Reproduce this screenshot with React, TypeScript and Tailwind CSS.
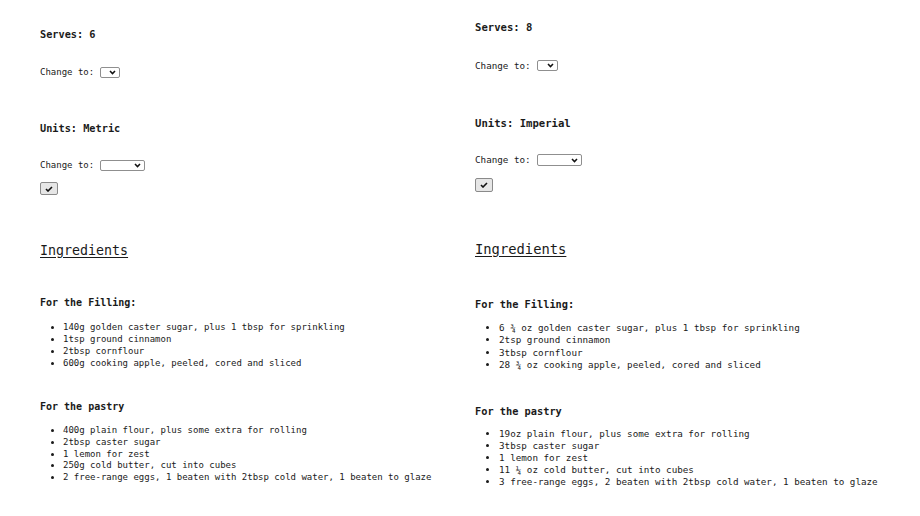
import React from "react";

const mono = { fontFamily: '"DejaVu Sans Mono", "Liberation Mono", monospace' };

function Chevron() {
  return (
    <svg width="7" height="5" viewBox="0 0 7 5" className="block">
      <path d="M1 1 L3.5 3.6 L6 1" fill="none" stroke="#111" strokeWidth="1.5" />
    </svg>
  );
}

function Select({ w }: { w: string }) {
  return (
    <span className={`${w} h-full border border-[#8f8f8f] rounded-[2px] bg-white flex items-center justify-end pr-[3px]`}>
      <Chevron />
    </span>
  );
}

function CheckBtn({ cls }: { cls: string }) {
  return (
    <div className={`${cls} border border-[#8a8a8a] rounded-[2px] bg-[#e6e6e6] flex items-center justify-center`}>
      <svg width="8" height="6" viewBox="0 0 8 6" className="block">
        <path d="M1 3 L3 5 L7 1" fill="none" stroke="#111" strokeWidth="1.6" />
      </svg>
    </div>
  );
}

export default function App() {
  return (
    <div className="w-[920px] h-[516px] bg-white text-[#1a1a1a] overflow-hidden grid grid-cols-[435px_1fr] pl-[40px]" style={mono}>
      {/* Left column */}
      <div className="flex flex-col items-start">
        <div className="mt-[28px] text-[10.25px] leading-[12px] font-bold">Serves: 6</div>
        <div className="mt-[27px] h-[11px] flex items-center text-[9px]">
          <span>Change to:</span>
          <span className="ml-[6px] h-full flex"><Select w="w-[20px]" /></span>
        </div>
        <div className="mt-[44px] text-[10.25px] leading-[12px] font-bold">Units: Metric</div>
        <div className="mt-[26px] h-[11px] flex items-center text-[9px]">
          <span>Change to:</span>
          <span className="ml-[6px] h-full flex"><Select w="w-[45px]" /></span>
        </div>
        <CheckBtn cls="mt-[11px] h-[13px] w-[18px]" />
        <div className="mt-[48px] text-[13.3px] leading-[16px] underline underline-offset-[2px]">Ingredients</div>
        <div className="mt-[38px] text-[10px] leading-[12px] font-bold">For the Filling:</div>
        <ul className="mt-[12px] list-disc pl-[23px] text-[9px] leading-[12px]">
          <li>140g golden caster sugar, plus 1 tbsp for sprinkling</li>
          <li>1tsp ground cinnamon</li>
          <li>2tbsp cornflour</li>
          <li>600g cooking apple, peeled, cored and sliced</li>
        </ul>
        <div className="mt-[32px] text-[10px] leading-[12px] font-bold">For the pastry</div>
        <ul className="mt-[12px] list-disc pl-[23px] text-[9px] leading-[11.75px]">
          <li>400g plain flour, plus some extra for rolling</li>
          <li>2tbsp caster sugar</li>
          <li>1 lemon for zest</li>
          <li>250g cold butter, cut into cubes</li>
          <li>2 free-range eggs, 1 beaten with 2tbsp cold water, 1 beaten to glaze</li>
        </ul>
      </div>

      {/* Right column */}
      <div className="flex flex-col items-start">
        <div className="mt-[21px] text-[10.6px] leading-[12px] font-bold">Serves: 8</div>
        <div className="mt-[27px] h-[11px] flex items-center text-[9.25px]">
          <span>Change to:</span>
          <span className="ml-[6px] h-full flex"><Select w="w-[21px]" /></span>
        </div>
        <div className="mt-[46px] text-[10.6px] leading-[12px] font-bold">Units: Imperial</div>
        <div className="mt-[25px] h-[12px] flex items-center text-[9.25px]">
          <span>Change to:</span>
          <span className="ml-[6px] h-full flex"><Select w="w-[45px]" /></span>
        </div>
        <CheckBtn cls="mt-[12px] h-[14px] w-[18px]" />
        <div className="mt-[49px] text-[13.8px] leading-[16px] underline underline-offset-[2px]">Ingredients</div>
        <div className="mt-[41px] text-[10.3px] leading-[12px] font-bold">For the Filling:</div>
        <ul className="mt-[12px] list-disc pl-[24px] text-[9.25px] leading-[12.33px]">
          <li>6 ¾ oz golden caster sugar, plus 1 tbsp for sprinkling</li>
          <li>2tsp ground cinnamon</li>
          <li>3tbsp cornflour</li>
          <li>28 ¾ oz cooking apple, peeled, cored and sliced</li>
        </ul>
        <div className="mt-[34px] text-[10.3px] leading-[12px] font-bold">For the pastry</div>
        <ul className="mt-[11px] list-disc pl-[24px] text-[9.25px] leading-[12px]">
          <li>19oz plain flour, plus some extra for rolling</li>
          <li>3tbsp caster sugar</li>
          <li>1 lemon for zest</li>
          <li>11 ¼ oz cold butter, cut into cubes</li>
          <li>3 free-range eggs, 2 beaten with 2tbsp cold water, 1 beaten to glaze</li>
        </ul>
      </div>
    </div>
  );
}
